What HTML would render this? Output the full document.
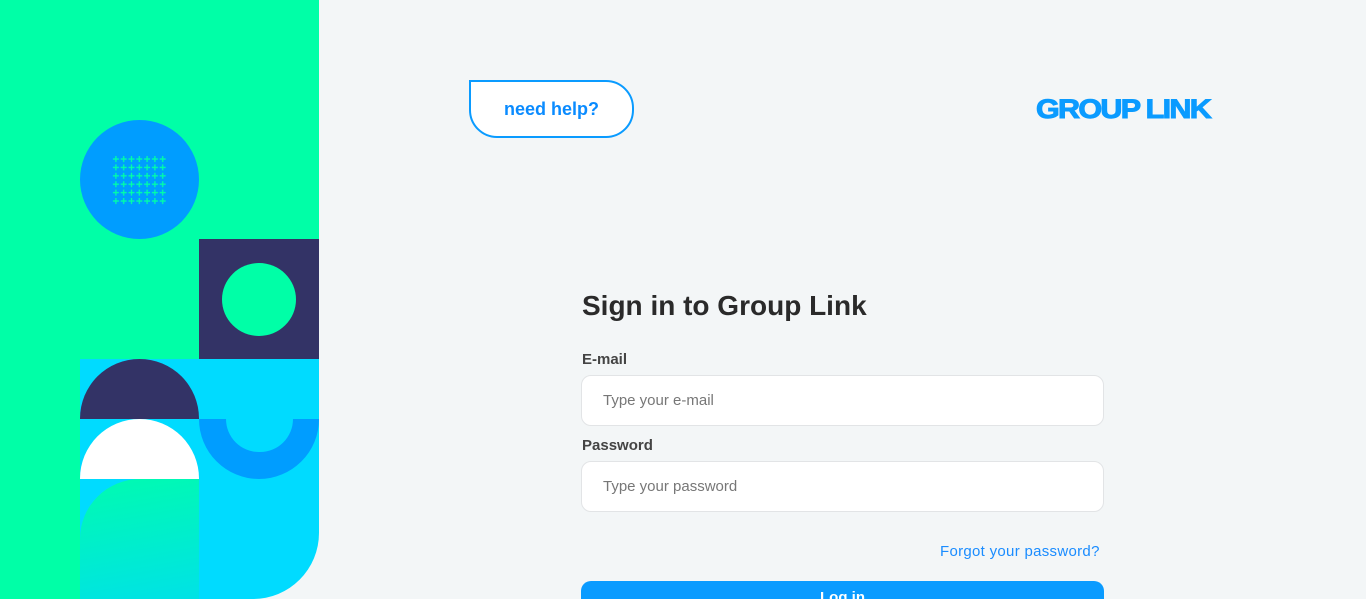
<!DOCTYPE html>
<html style="width:1366px;height:599px;overflow:hidden"><head><style>
*{margin:0;padding:0;box-sizing:border-box}
body{width:1366px;height:599px;overflow:hidden;background:#f3f6f7;font-family:"Liberation Sans",sans-serif;position:relative}
.a{position:absolute}
</style></head><body>
<div class="a" style="left:0;top:0;width:319px;height:599px;background:#00ffa7"></div>
<div class="a" style="left:199px;top:479px;width:120px;height:120px;background:#f3f6f7"></div>
<div class="a" style="left:80px;top:359px;width:239px;height:240px;background:#00dbff;border-bottom-right-radius:66px"></div>
<div class="a" style="left:80px;top:120px;width:119px;height:119px;border-radius:50%;background:#009dff"></div>
<svg class="a" style="left:112px;top:155px" width="56" height="50">
<defs><pattern id="p" x="0" y="0" width="7.8" height="8.4" patternUnits="userSpaceOnUse"><path d="M3.9 1v6M0.9 4h6" stroke="#00ffa7" stroke-width="1.3"/></pattern></defs>
<rect width="55" height="50" fill="url(#p)"/></svg>
<div class="a" style="left:199px;top:239px;width:120px;height:120px;background:#333366"></div>
<div class="a" style="left:222px;top:263px;width:74px;height:73px;border-radius:50%;background:#00ffa7"></div>
<div class="a" style="left:80px;top:359px;width:119px;height:60px;border-radius:60px 60px 0 0;background:#333366"></div>
<div class="a" style="left:80px;top:419px;width:119px;height:60px;border-radius:60px 60px 0 0;background:#fff"></div>
<div class="a" style="left:199px;top:419px;width:120px;height:60px;border-radius:0 0 60px 60px;background:#009dff"></div>
<div class="a" style="left:226px;top:419px;width:67px;height:33px;border-radius:0 0 34px 34px;background:#00dbff"></div>
<div class="a" style="left:80px;top:479px;width:119px;height:120px;border-radius:60px 0 0 0;background:linear-gradient(170deg,#00fbb0,#00e2e6)"></div>

<div class="a" style="left:469px;top:80px;width:165px;height:58px;border:2px solid #0a9bff;border-radius:0 28px 28px 28px;background:#fff;color:#0a8bff;font-weight:bold;font-size:18px;line-height:54px;text-align:center">need help?</div>
<div class="a" style="left:1036px;top:94px;color:#0a9bff;font-weight:900;font-size:27px;letter-spacing:-1.5px;transform:scaleX(1.13);transform-origin:left;-webkit-text-stroke:1px #0a9bff">GROUP LINK</div>

<div class="a" style="left:582px;top:290px;font-size:28px;font-weight:bold;color:#2a2a2a">Sign in to Group Link</div>
<div class="a" style="left:582px;top:351px;font-size:15px;font-weight:bold;color:#444">E-mail</div>
<div class="a" style="left:581px;top:375px;width:523px;height:51px;background:#fff;border:1px solid #e2e4e6;border-radius:10px;padding-left:21px;line-height:50px;font-size:15px;color:#777">Type your e-mail</div>
<div class="a" style="left:582px;top:437px;font-size:15px;font-weight:bold;color:#444">Password</div>
<div class="a" style="left:581px;top:461px;width:523px;height:51px;background:#fff;border:1px solid #e2e4e6;border-radius:10px;padding-left:21px;line-height:50px;font-size:15px;color:#777">Type your password</div>
<div class="a" style="left:940px;top:543px;font-size:15px;color:#1a8cff;letter-spacing:0.3px">Forgot your password?</div>
<div class="a" style="left:581px;top:581px;width:523px;height:18px;overflow:hidden;background:#0a9bff;border-radius:10px 10px 0 0;color:#fff;font-weight:bold;font-size:15px;text-align:center;line-height:34px">Log in</div>
</body></html>
